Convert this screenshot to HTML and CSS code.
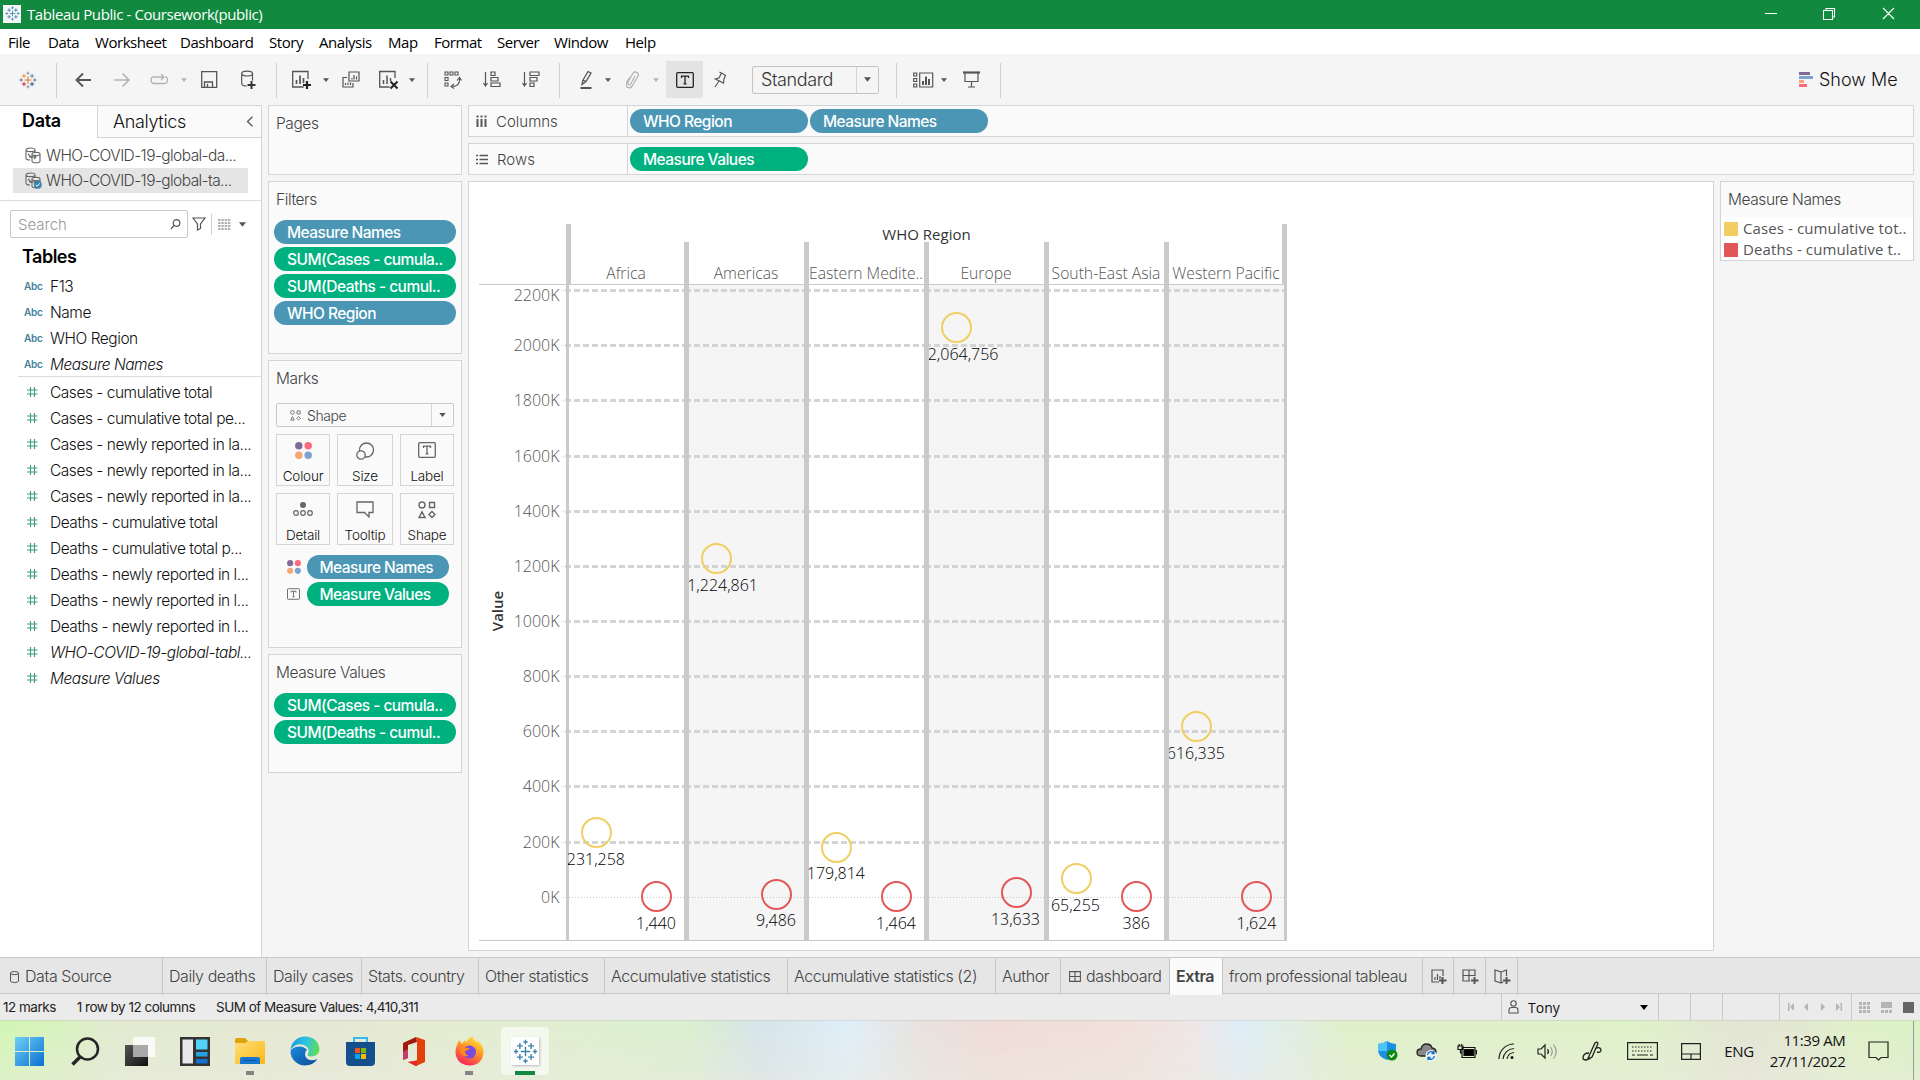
FILE: index.html
```html
<!DOCTYPE html>
<html lang="en">
<head>
<meta charset="utf-8">
<title>Tableau Public - Coursework(public)</title>
<link rel="stylesheet" href="styles.css">
</head>
<body>
<svg width="0" height="0" class="defs">
  <defs>
    <symbol id="hash" viewBox="0 0 12 12"><path d="M4.500 1v10M8.500 1v10M1 4h10.500M1 8h10.500" stroke="#3a9d7c" stroke-width="1.100" fill="none"/></symbol>
    <symbol id="caret" viewBox="0 0 8 5"><path d="M0 0h8L4 5z"/></symbol>
    <symbol id="dots" viewBox="0 0 16 16"><circle cx="3.600" cy="3.600" r="3.500" fill="#826a98"/><circle cx="12.400" cy="3.600" r="3.500" fill="#fb6a7b"/><circle cx="3.600" cy="12.400" r="3.500" fill="#f5a675"/><circle cx="12.400" cy="12.400" r="3.500" fill="#7ea2cf"/></symbol>
    <symbol id="shapes" viewBox="0 0 18 18"><g fill="none" stroke="#666" stroke-width="1.400"><circle cx="4" cy="4" r="3"/><path d="M11.500 1.500h5v5h-5zM4 10.800l3 5.700H1zM14 10.500l3 3-3 3-3-3z"/></g></symbol>
    <symbol id="label" viewBox="0 0 18 16"><g fill="none" stroke="#666" stroke-width="1.300"><rect x=".7" y=".7" width="16.600" height="14.600" rx="1"/><path d="M5.500 6V4.200h7V6M9 4.200v7.600M7.500 11.800h3"/></g></symbol>
    <symbol id="dbs" viewBox="0 0 16 17"><g fill="none" stroke="#666" stroke-width="1.100"><path d="M10 5V3c0-2.600-9-2.600-9 0v8c0 1 1.500 2 4 2M1 3c0 2.200 9 2.200 9 0M3 7l3 3 3-1"/><path fill="#fff" fill-opacity=".6" d="M7 7v7c0 2.400 8 2.400 8 0V7c0-2.200-8-2.200-8 0c0 2 8 2 8 0"/><path d="M4 10h7M9 8l2 2-2 2"/></g></symbol>
    <symbol id="plusmark" viewBox="0 0 29 29"><g fill="none" stroke-width="1.500"><path stroke="#e8762d" d="M14.500 9v11M9 14.500h11" stroke-width="1.800"/><path stroke="#c72035" d="M8 17.500v7M4.500 21h7"/><path stroke="#1f4e79" d="M21 17.500v7M17.500 21h7"/><path stroke="#eb912c" d="M8 4.500v7M4.500 8h7"/><path stroke="#59879b" d="M21 4.500v7M17.500 8h7"/><path stroke="#7199a6" d="M14.500 1v5M12 3.500h5M14.500 23v5M12 25.500h5"/><path stroke="#5b6591" d="M25.500 12v5M23 14.500h5M3.500 12v5M1 14.500h5"/></g></symbol>
    <symbol id="bluemark" viewBox="0 0 29 29"><g fill="none" stroke="#3d82aa" stroke-width="1.600"><path d="M14.500 9v11M9 14.500h11M8 17.500v7M4.500 21h7M21 17.500v7M17.500 21h7M8 4.500v7M4.500 8h7M21 4.500v7M17.500 8h7M14.500 1v5M12 3.500h5M14.500 23v5M12 25.500h5M25.500 12v5M23 14.500h5M3.500 12v5M1 14.500h5"/></g></symbol>
  </defs>
</svg>

<header class="titlebar">
  <span class="app-badge"><svg width="15" height="15"><use href="#bluemark"/></svg></span>
  <span class="app-title">Tableau Public - Coursework(public)</span>
  <svg class="window-buttons" width="130" height="14" fill="none" stroke="#fff" stroke-width="1.100"><path d="M0 6.500h12M58.500 3.500h9v9h-9zM61 3.500V1.500h8.500V10h-2M118 1l11 11M129 1l-11 11"/></svg>
</header>

<nav class="menubar"><span>File</span><span>Data</span><span>Worksheet</span><span>Dashboard</span><span>Story</span><span>Analysis</span><span>Map</span><span>Format</span><span>Server</span><span>Window</span><span>Help</span></nav>

<div class="toolbar">
  <svg width="18" height="18"><use href="#plusmark"/></svg>
  <i class="sep"></i>
  <svg width="18" height="16" fill="none" stroke="#555" stroke-width="1.900"><path d="M16 8H1.500M8 1.500L1.500 8 8 14.500"/></svg>
  <svg width="18" height="16" fill="none" stroke="#b4b4b4" stroke-width="1.600"><path d="M0 8h15M8.500 1.500L15 8l-6.500 6.500"/></svg>
  <svg width="20" height="14" fill="none" stroke="#b4b4b4" stroke-width="1.300"><path d="M13 4H3.500Q1 4 1 7t2.500 3.500h10.500Q17.500 10.500 17.500 7T15 4M11 1l3 3-3 3"/></svg>
  <svg class="caret pale" width="6" height="4"><use href="#caret"/></svg>
  <svg width="18" height="17" fill="none" stroke="#555" stroke-width="1.300"><path d="M.7 .7h15v15.600H.7zM3.500 16v-5h8v5M6.500 13v3"/></svg>
  <svg width="16" height="20" fill="none" stroke="#555" stroke-width="1.200"><path d="M.7 3.500v10c0 1.500 2 2.500 5 2.500M11.500 3.500v7M.7 3.500c0-3.300 10.800-3.300 10.800 0s-10.800 3.300-10.800 0"/><path d="M10.500 11v8M6.500 15h8" stroke="#333" stroke-width="2"/></svg>
  <i class="sep"></i>
  <svg width="20" height="20" fill="none" stroke="#555" stroke-width="1.300"><path d="M16 9V1.500H.7V17h11"/><path d="M4.500 10v4M8 5.500V14M11.500 8v5" stroke-width="1.700"/><path d="M15 11v8M11 15h8" stroke="#222" stroke-width="2.200"/></svg>
  <svg class="caret" width="6" height="4"><use href="#caret"/></svg>
  <svg width="18" height="18" fill="none" stroke="#555" stroke-width="1.200"><path d="M7 1h10v9H7zM10 7v1.500M12 4v4.500M14.500 5.500v3M5 6.500H1V16h10v-4M3.500 12v2M6 11.500V14M8.500 11.500V14"/></svg>
  <svg width="20" height="20" fill="none" stroke="#555" stroke-width="1.300"><path d="M16 8V1.500H.7V17h10"/><path d="M4.500 10v4M8 5.500V14M11.500 8v3" stroke-width="1.500"/><path d="M11.500 11.500l7 7M18.500 11.500l-7 7" stroke="#222" stroke-width="2"/></svg>
  <svg class="caret" width="6" height="4"><use href="#caret"/></svg>
  <i class="sep"></i>
  <svg width="18" height="18" fill="none" stroke="#555" stroke-width="1.100"><path d="M1 1h3v3H1zM6 1h3v3H6zM11 1h3v3h-3zM1 6.500h3v3H1zM1 12h3v3H1zM15.500 7v2q0 6-7 6.500M13 9.500L15.500 6.500 17.500 9.500M10 13L7 15.500l3 2"/></svg>
  <svg width="18" height="17" fill="none" stroke="#555" stroke-width="1.200"><path d="M2.500 1v13M.5 12l2 3 2-3M8 1h4v3.500H8zM8 6.500h7V10H8zM8 12h9v3.500H8z"/></svg>
  <svg width="18" height="17" fill="none" stroke="#555" stroke-width="1.200"><path d="M2.500 1v13M.5 12l2 3 2-3M8 1h9v3.500H8zM8 6.500h7V10H8zM8 12h4v3.500H8z"/></svg>
  <i class="sep"></i>
  <svg width="14" height="20" fill="none" stroke="#555" stroke-width="1.300"><path d="M3 10L8 1.500l3 1.500-5 8.500-4 3zM3 10l3 1.500"/><path d="M.5 18h11" stroke-width="2"/></svg>
  <svg class="caret" width="6" height="4"><use href="#caret"/></svg>
  <svg width="14" height="18" fill="none" stroke="#b0b0b0" stroke-width="1.200"><path d="M9 5L5 12.500q-1 2-2.500 1T2.500 10L6.500 3Q8.500-.5 11 1.500T11.500 6L7.500 13Q5 18 2 16.500T1 11L3.500 6.500"/></svg>
  <svg class="caret pale" width="6" height="4"><use href="#caret"/></svg>
  <span class="tool-active"><svg width="18" height="16" fill="none" stroke="#222" stroke-width="1.300"><rect x=".7" y=".7" width="16.600" height="14.600" rx="1"/><path d="M5.500 6V4.200h7V6M9 4.200v7.600M7.500 11.800h3"/></svg></span>
  <svg width="14" height="17" fill="none" stroke="#555" stroke-width="1.200"><path d="M5.500 1l6.500 3.500M7.500 2L5 7 1.500 8l8 4 .5-4L11.500 4M5 10L1 16"/></svg>
  <div class="fit-select"><span>Standard</span><b><svg class="caret" width="7" height="5"><use href="#caret"/></svg></b></div>
  <i class="sep"></i>
  <svg width="21" height="16" fill="none" stroke="#555" stroke-width="1.200"><path d="M.7 1h3v3h-3zM.7 6.500h3v3h-3zM.7 12h3v3h-3zM6.700 1h13v14h-13z"/><path d="M10 9v4M13 4.500V13M16 7v6" stroke-width="2"/></svg>
  <svg class="caret" width="6" height="4"><use href="#caret"/></svg>
  <svg width="18" height="17" fill="none" stroke="#555" stroke-width="1.200"><path d="M0 1.500h17" stroke-width="2.200"/><path d="M2 2v8.500h13V2M8.500 10.500V16M5 16h7"/></svg>
  <i class="sep"></i>
  <div class="show-me"><svg width="14" height="16"><path fill="#826a98" d="M0 0h11v3H0z"/><path fill="#7ea2cf" d="M0 4h14v3H0z"/><path fill="#f5a675" d="M0 8h5v3H0z"/><path fill="#fb6a7b" d="M0 12h8v3H0z"/></svg><span>Show Me</span></div>
</div>

<main class="workspace">
  <aside class="data-pane">
    <div class="pane-tabs"><span class="pane-tab-on">Data</span><span class="pane-tab">Analytics<svg width="8" height="11" fill="none" stroke="#555" stroke-width="1.300"><path d="M6.500 .8L1.500 5.500l5 4.700"/></svg></span></div>
    <div class="sources">
      <div class="source"><svg width="16" height="17"><use href="#dbs"/></svg><span>WHO-COVID-19-global-da...</span></div>
      <div class="source picked"><svg width="17" height="17"><use href="#dbs" width="16" height="17"/><circle cx="12.800" cy="12.800" r="4" fill="#3b83a8"/><path d="M10.800 12.800l1.500 1.500 2.500-3" stroke="#fff" fill="none"/></svg><span>WHO-COVID-19-global-ta...</span></div>
    </div>
    <div class="search-row">
      <div class="search"><span>Search</span><svg width="11" height="11" fill="none" stroke="#555" stroke-width="1.200"><circle cx="6.500" cy="4" r="3.300"/><path d="M4 6.500L.8 10"/></svg></div>
      <svg width="14" height="14" fill="none" stroke="#555" stroke-width="1.200"><path d="M1 1h12L8.500 7v4.500L5.500 13V7z"/></svg>
      <i class="sep"></i>
      <svg width="13" height="11" stroke="#666" stroke-width="1.200"><path d="M0 1h13M0 4h13M0 7h13M0 10h13" stroke-dasharray="2.500 .8"/></svg>
      <svg class="caret" width="7" height="5"><use href="#caret"/></svg>
    </div>
    <h2 class="tables">Tables</h2>
    <ul class="fields dims">
      <li><b>Abc</b>F13</li>
      <li><b>Abc</b>Name</li>
      <li><b>Abc</b>WHO Region</li>
      <li><b>Abc</b><em>Measure Names</em></li>
    </ul>
    <ul class="fields">
      <li><svg width="12" height="12"><use href="#hash"/></svg>Cases - cumulative total</li>
      <li><svg width="12" height="12"><use href="#hash"/></svg>Cases - cumulative total pe...</li>
      <li><svg width="12" height="12"><use href="#hash"/></svg>Cases - newly reported in la...</li>
      <li><svg width="12" height="12"><use href="#hash"/></svg>Cases - newly reported in la...</li>
      <li><svg width="12" height="12"><use href="#hash"/></svg>Cases - newly reported in la...</li>
      <li><svg width="12" height="12"><use href="#hash"/></svg>Deaths - cumulative total</li>
      <li><svg width="12" height="12"><use href="#hash"/></svg>Deaths - cumulative total p...</li>
      <li><svg width="12" height="12"><use href="#hash"/></svg>Deaths - newly reported in l...</li>
      <li><svg width="12" height="12"><use href="#hash"/></svg>Deaths - newly reported in l...</li>
      <li><svg width="12" height="12"><use href="#hash"/></svg>Deaths - newly reported in l...</li>
      <li><svg width="12" height="12"><use href="#hash"/></svg><em>WHO-COVID-19-global-tabl...</em></li>
      <li><svg width="12" height="12"><use href="#hash"/></svg><em>Measure Values</em></li>
    </ul>
  </aside>

  <section class="cards">
    <div class="card pages"><h3>Pages</h3></div>
    <div class="card filters"><h3>Filters</h3>
      <span class="pill blue">Measure Names</span><span class="pill green">SUM(Cases - cumula..</span><span class="pill green">SUM(Deaths - cumul..</span><span class="pill blue">WHO Region</span>
    </div>
    <div class="card marks"><h3>Marks</h3>
      <div class="mark-type"><svg width="11" height="11"><use href="#shapes"/></svg><span>Shape</span><b><svg class="caret" width="7" height="4"><use href="#caret"/></svg></b></div>
      <div class="mark-buttons">
        <div><svg width="17" height="17"><use href="#dots"/></svg><span>Colour</span></div>
        <div><svg width="18" height="18" fill="none" stroke="#666" stroke-width="1.300"><circle cx="10.500" cy="8" r="7"/><circle cx="5" cy="13" r="4.200" fill="#fafafa"/></svg><span>Size</span></div>
        <div><svg width="18" height="16"><use href="#label"/></svg><span>Label</span></div>
        <div><svg width="20" height="16" fill="none" stroke="#666" stroke-width="1.200"><circle cx="10" cy="4" r="3" fill="#666" stroke="none"/><circle cx="3" cy="12" r="2.300"/><circle cx="10" cy="12" r="2.300"/><circle cx="17" cy="12" r="2.300"/></svg><span>Detail</span></div>
        <div><svg width="18" height="17" fill="none" stroke="#666" stroke-width="1.300"><path d="M1 1h16v10.500h-4V16l-4.500-4.500H1z"/></svg><span>Tooltip</span></div>
        <div><svg width="18" height="18"><use href="#shapes"/></svg><span>Shape</span></div>
      </div>
      <div class="mark-pill"><svg width="14" height="14"><use href="#dots"/></svg><span class="pill blue">Measure Names</span></div>
      <div class="mark-pill"><svg width="13" height="12"><use href="#label"/></svg><span class="pill green">Measure Values</span></div>
    </div>
    <div class="card values"><h3>Measure Values</h3>
      <span class="pill green">SUM(Cases - cumula..</span><span class="pill green">SUM(Deaths - cumul..</span>
    </div>
  </section>

  <section class="sheet">
    <div class="shelf"><div class="shelf-name"><svg width="11" height="13" stroke="#555" stroke-width="2"><path d="M1.500 4v8M5.500 4v8M9.500 4v8M1.500 .5v2M5.500 .5v2M9.500 .5v2"/></svg><span>Columns</span></div><span class="pill blue">WHO Region</span><span class="pill blue">Measure Names</span></div>
    <div class="shelf"><div class="shelf-name"><svg width="12" height="11" stroke="#555" stroke-width="1.700"><path d="M3.500 1.500h8.500M3.500 5.500h8.500M3.500 9.500h8.500M0 1.500h2M0 5.500h2M0 9.500h2"/></svg><span>Rows</span></div><span class="pill green">Measure Values</span></div>
    <div class="canvas-row">
      <div class="view">
        <svg class="chart" width="1243" height="767" viewBox="469 182 1243 767">
          <defs>
            <path id="grid" d="M565 0h120M685 0h120M805 0h120M925 0h120M1045 0h120M1165 0h120"/>
            <clipPath id="plot"><path d="M568 285h117v655H568zM689 285h116v655H689zM808.500 285h117v655h-117zM929 285h116v655H929zM1049 285h116v655h-116zM1169 285h116v655h-116z"/></clipPath>
          </defs>
          <path class="band" d="M687 285h120v655H687zM927 285h120v655H927zM1167 285h118v655h-118z"/>
          <g class="gridlines">
            <use href="#grid" y="290.500"/><use href="#grid" y="345.500"/><use href="#grid" y="400.500"/><use href="#grid" y="456.500"/><use href="#grid" y="511.500"/><use href="#grid" y="566.500"/><use href="#grid" y="621.500"/><use href="#grid" y="676.500"/><use href="#grid" y="731.500"/><use href="#grid" y="786.500"/><use href="#grid" y="842.500"/>
          </g>
          <path class="zero" d="M569 897.500h716"/>
          <path class="ticks" d="M561 290.500h5M561 345.500h5M561 400.500h5M561 456.500h5M561 511.500h5M561 566.500h5M561 621.500h5M561 676.500h5M561 731.500h5M561 786.500h5M561 842.500h5M561 897.500h5"/>
          <path class="frame" d="M479 284h808v1H479zM479 940h808v1H479zM566 224h5v61h-5zM566 285h3v655h-3zM684 242h5v698h-5zM804 242h5v698h-5zM924 242h5v698h-5zM1044 242h5v698h-5zM1164 242h5v698h-5zM1282 224h5v61h-5zM1284 285h3v655h-3z"/>
          <g class="mark cases"><circle cx="596.500" cy="832.500" r="14.500"/><circle cx="716.500" cy="558.500" r="14.500"/><circle cx="836.500" cy="847.500" r="14.500"/><circle cx="956.500" cy="327.500" r="14.500"/><circle cx="1076.500" cy="878.500" r="14.500"/><circle cx="1196.500" cy="726.500" r="14.500"/></g>
          <g class="mark deaths"><circle cx="656.500" cy="896.500" r="14.500"/><circle cx="776.500" cy="894.500" r="14.500"/><circle cx="896.500" cy="896.500" r="14.500"/><circle cx="1016.500" cy="892.500" r="14.500"/><circle cx="1136.500" cy="896.500" r="14.500"/><circle cx="1256.500" cy="896.500" r="14.500"/></g>
          <g class="values" clip-path="url(#plot)">
            <text x="625" y="865">231,258</text><text x="676" y="929">1,440</text>
            <text x="758" y="591">1,224,861</text><text x="796" y="926">9,486</text>
            <text x="865" y="879">179,814</text><text x="916" y="929">1,464</text>
            <text x="998.500" y="360">2,064,756</text><text x="1040" y="925">13,633</text>
            <text x="1100" y="911">65,255</text><text x="1150" y="929">386</text>
            <text x="1225" y="759">616,335</text><text x="1276.500" y="929">1,624</text>
          </g>
          <g class="ylabels">
            <text x="559.500" y="301">2200K</text><text x="559.500" y="351">2000K</text><text x="559.500" y="406">1800K</text><text x="559.500" y="462">1600K</text><text x="559.500" y="517">1400K</text><text x="559.500" y="572">1200K</text><text x="559.500" y="627">1000K</text><text x="559.500" y="682">800K</text><text x="559.500" y="737">600K</text><text x="559.500" y="792">400K</text><text x="559.500" y="848">200K</text><text x="559.500" y="903">0K</text>
          </g>
          <g class="headers">
            <text x="626" y="279">Africa</text><text x="746" y="279">Americas</text><text x="866" y="279">Eastern Medite..</text><text x="986" y="279">Europe</text><text x="1106" y="279">South-East Asia</text><text x="1226" y="279">Western Pacific</text>
          </g>
          <text class="axis-title" x="926.500" y="240">WHO Region</text>
          <text class="axis-title strong" transform="translate(502.500 611) rotate(-90)">Value</text>
        </svg>
      </div>
      <div class="legend"><h3>Measure Names</h3>
        <div class="legend-items">
          <p><i class="cases-key"></i><span>Cases - cumulative tot..</span></p>
          <p><i class="deaths-key"></i><span>Deaths - cumulative t..</span></p>
        </div>
      </div>
    </div>
  </section>
</main>

<div class="sheet-tabs">
  <span><svg width="9" height="12" fill="none" stroke="#555"><path d="M.5 2v8q0 1.500 4 1.500T8.500 10V2Q8.500 .5 4.500 .5T.5 2q0 1.700 4 1.700T8.500 2"/></svg>Data Source</span><span>Daily deaths</span><span>Daily cases</span><span>Stats. country</span><span>Other statistics</span><span>Accumulative statistics</span><span>Accumulative statistics (2)</span><span>Author</span><span class="dash-tab"><svg width="12" height="11" fill="none" stroke="#555" stroke-width="1.100"><path d="M.6 .6h10.800v9.800H.6zM6 .6v9.800M.6 5.500h10.800"/></svg>dashboard</span><span class="current">Extra</span><span>from professional tableau</span>
  <span class="new"><svg width="17" height="16" fill="none" stroke="#555" stroke-width="1.200"><path d="M12 7V1H1v12h7M4 8v3M6.500 5v6M9 7v3"/><path d="M11.500 8v7M8 11.500h7.500" stroke-width="2"/></svg></span>
  <span class="new"><svg width="17" height="16" fill="none" stroke="#555" stroke-width="1.200"><path d="M13 7V1H1v11h7M7 1v11M1 6.500h12"/><path d="M12.500 8v7M9 11.500h7.500" stroke-width="2"/></svg></span>
  <span class="new"><svg width="17" height="16" fill="none" stroke="#555" stroke-width="1.200"><path d="M7 3v11L1 12V1zM7 3l5.500-2V7M7 14l2-1"/><path d="M12.500 8v7M9 11.500h7.500" stroke-width="2"/></svg></span>
  <span class="rest"></span>
</div>

<div class="status">
  <span>12 marks</span><span>1 row by 12 columns</span><span>SUM of Measure Values: 4,410,311</span>
  <span class="user"><svg width="11" height="14" fill="none" stroke="#555" stroke-width="1.100"><circle cx="5.500" cy="3.500" r="2.700"/><path d="M1 13V10q0-2.500 2.500-2.500h4Q10 7.500 10 10v3z"/></svg>Tony<svg class="caret dark" width="8" height="5"><use href="#caret"/></svg></span>
  <span class="cell"></span><span class="cell"></span><span class="cell"></span>
  <span class="cell"><svg width="56" height="10" fill="#b4b4b4"><path d="M1 1h1.500v8H1zM7 1v8L3 5zM21 1v8l-4-4zM34 1v8l4-4zM49 1v8l4-4zM53.500 1H55v8h-1.500z"/></svg></span>
  <span class="cell"><svg width="56" height="11" fill="#b4b4b4"><path d="M0 0h3v3H0zM4 0h3v3H4zM8 0h3v3H8zM0 4h3v3H0zM4 4h3v3H4zM8 4h3v3H8zM0 8h3v3H0zM4 8h3v3H4zM8 8h3v3H8zM22 0h11v6H22zM22 8h3v3h-3zM26 8h3v3h-3zM30 8h3v3h-3z"/><path fill="#666" d="M44 0h11v11H44z"/></svg></span>
</div>

<footer class="taskbar">
  <svg width="29" height="29"><defs><linearGradient id="win" x2="1" y2="1"><stop stop-color="#6fd0f8"/><stop offset="1" stop-color="#0a6fd0"/></linearGradient></defs><path fill="url(#win)" d="M0 0h14v14H0zM15 0h14v14H15zM0 15h14v14H0zM15 15h14v14H15z"/></svg>
  <svg width="29" height="29" fill="none" stroke="#262626" stroke-width="2.500"><circle cx="16.500" cy="12" r="10.500"/><path d="M9 20l-7.500 7.500" stroke-width="3.500"/></svg>
  <svg width="30" height="29"><defs><linearGradient id="tv" x2="1" y2="1"><stop stop-color="#555"/><stop offset="1" stop-color="#111"/></linearGradient></defs><path fill="url(#tv)" d="M0 8h23v21H0z"/><path fill="#fff" opacity=".8" d="M8 0h22v20H8z"/><path fill="#999" opacity=".75" d="M8 8h15v12H8z"/></svg>
  <svg width="30" height="29"><path fill="#333" d="M0 0h30v29H0z"/><path fill="#e6e8eb" d="M2.500 2.500H13v24H2.500z"/><path fill="#4fd3fb" d="M16 2.500h11.500v10H16z"/><path fill="#2aa0e0" d="M16 15h11.500v4.500H16z"/><path fill="#1473d2" d="M16 22h11.500v4.500H16z"/></svg>
  <span class="running"><svg width="30" height="29"><defs><linearGradient id="fo" x2="1" y2="1"><stop stop-color="#ffdf7a"/><stop offset="1" stop-color="#fcb714"/></linearGradient></defs><path fill="#e0a008" d="M0 3q0-2 2-2h8l3 3v6H0z"/><path fill="url(#fo)" d="M0 6h10l3-2h17v23H0z"/><path fill="#1677d0" d="M5 27v-5q0-2 2-2h16q2 0 2 2v5z"/><path stroke="#0a4f9c" d="M9 23.500h12"/></svg></span>
  <svg width="30" height="30" viewBox="0 0 30 30"><defs><linearGradient id="ed" x1="0" y1=".4" x2="1" y2=".6"><stop stop-color="#1f9de4"/><stop offset=".5" stop-color="#2fc4e0"/><stop offset="1" stop-color="#62df4d"/></linearGradient><linearGradient id="eb" x2="1" y2="1"><stop stop-color="#1b8be0"/><stop offset="1" stop-color="#0d4a94"/></linearGradient></defs><path fill="url(#eb)" d="M.500 15A14.500 14.500 0 0 0 15 29.500q8 0 12.500-6.500-9 3.500-12-2.500-1.500-4 1.500-6.500-3-4-8-3.500Q2 11 .5 15z"/><path fill="url(#ed)" d="M.5 14.500A14.500 14.500 0 0 1 15 .5Q28 1 29.500 13q0 7-8 7.500-5 0-3.500-3 2-3.500-1.500-7Q10 6 3.500 10.500.8 12.500.5 14.500z"/></svg>
  <svg width="29" height="29"><path fill="none" stroke="#35b8ee" stroke-width="2" d="M8 6V1h13v5"/><path fill="#15508e" d="M0 5h29v20q0 4-4 4H4q-4 0-4-4z"/><path fill="#f25022" d="M9 11h5v5H9z"/><path fill="#7fba00" d="M15 11h5v5h-5z"/><path fill="#00a4ef" d="M9 17h5v5H9z"/><path fill="#ffb900" d="M15 17h5v5h-5z"/></svg>
  <svg width="22" height="29"><path fill="#e2410b" d="M13 0l9 3v22l-9 4-8-4 9-1.500V5z"/><path fill="#9e1b0e" d="M13 0L0 6v17l5-2V8l9-3z"/><path fill="#c23b6c" d="M0 15l5-3v9l-5 2z"/><path fill="#e02a2a" d="M5 25l9-1.500V29l-1 .0z"/></svg>
  <span class="running"><svg width="29" height="30"><defs><linearGradient id="ff" x1=".8" y1="0" x2=".3" y2="1"><stop stop-color="#fff045"/><stop offset=".45" stop-color="#ff9a24"/><stop offset="1" stop-color="#f5205d"/></linearGradient></defs><path fill="url(#ff)" d="M2 9l2-5 3 4 3-4 1 3Q13 2 18 0q-1 3 4 6l1-1q6 5 5.500 12Q27 29 15 29.500 2 29 .5 17 .5 12 2 9z"/><circle cx="14.500" cy="16" r="6.500" fill="#7a4be0"/><path fill="#ff8a1f" d="M6 11q5 1 9 1-2 3-5 3 0 4 4 5-7 1-9-4z"/></svg></span>
  <span class="running active"><span class="tab-tile"><svg width="25" height="25"><use href="#bluemark"/></svg></span></span>
  <i></i>
  <svg width="20" height="20"><path fill="#1e90e4" d="M9 0q4 3 9 3v6q0 7-9 10Q0 16 0 9V3q5 0 9-3z"/><path fill="#4cc6f6" d="M9 0v10H0V3q5 0 9-3z"/><circle cx="14" cy="14" r="5.500" fill="#0d8a16"/><path d="M11.500 14l2 2 3-3.500" stroke="#fff" stroke-width="1.300" fill="none"/></svg>
  <svg width="21" height="19"><path fill="#888" stroke="#222" stroke-width="1.300" d="M5 14Q1 14 1 10.500T5 7Q6 2 10.500 2T16 6q4 .5 4 4t-4 4z"/><circle cx="15" cy="13.500" r="5.500" fill="#eef4fa"/><path fill="none" stroke="#0b6bc4" stroke-width="1.300" d="M11.500 13a3.700 3.700 0 0 1 6.500-2M18 9v2.500h-2.500M18.500 14a3.700 3.700 0 0 1-6.500 2M12 18v-2.500h2.500"/></svg>
  <svg width="20" height="15" fill="none" stroke="#111" stroke-width="1.200"><path d="M5 3.500h13v10H5zM18.500 6.500h1v4M1 2h5v3.500H1zM2.200 2V0M4.700 2V0M3.500 5.500V9H5"/><path fill="#000" d="M7 5.500h9.500v6H7z"/></svg>
  <svg width="17" height="17" fill="none" stroke="#222" stroke-width="1.200"><path d="M1 16A15 15 0 0 1 16 1M5 16A11.500 11.500 0 0 1 16 5.500M9 16a8 8 0 0 1 7-6.500"/><circle cx="14" cy="14.500" r="1.500" fill="#111" stroke="none"/></svg>
  <svg width="21" height="17" fill="none" stroke="#222" stroke-width="1.200"><path d="M1 6h3l4-4v13l-4-4H1zM10.500 6q2 2.500 0 5"/><path stroke="#999" d="M13.500 4q3.500 4.500 0 9M16.500 1.500q5.500 7 0 14"/></svg>
  <svg width="20" height="20" fill="none" stroke="#222" stroke-width="1.300"><path d="M7 15L13 2q2-2 3 .5L10 16l-3 2zM7 12Q1 12 1 17q0 2 3 2 2 0 3-4M13 8q5-3 6 1 0 3-4 2"/></svg>
  <svg width="31" height="18" fill="none" stroke="#222" stroke-width="1.200"><path d="M.6 .6h29.800v16.800H.6z"/><path stroke-dasharray="1.500 1.500" d="M5 5h21M5 9h21"/><path d="M5 13h3M10 13h11M23 13h3"/></svg>
  <svg width="20" height="17" fill="none" stroke="#222" stroke-width="1.200"><path d="M.6 .6h18.800v15.800H.6zM.6 11h18.800M10 11v5"/></svg>
  <span class="lang">ENG</span>
  <span class="clock">11:39 AM<br>27/11/2022</span>
  <svg width="21" height="21" fill="none" stroke="#222" stroke-width="1.200"><path d="M1 1h19v15.500h-7L10.500 19 8 16.500H1z"/></svg>
  <i class="peek"></i>
</footer>
</body>
</html>
```
FILE: styles.css
```css
* { box-sizing: border-box; margin: 0; padding: 0; }
body { width: 1920px; height: 1080px; overflow: hidden; background: #f5f5f5; font-family: "Inter", "Liberation Sans", sans-serif; font-size: 15px; color: #222; white-space: nowrap; }
.defs { position: absolute; }
svg { display: block; flex: none; }
ul { list-style: none; }
.sep { width: 1px; background: #cfcfcf; }
.caret { fill: #555; }
.caret.pale { fill: #b4b4b4; }
.caret.dark { fill: #000; }

.titlebar { height: 29px; background: #11893e; display: flex; align-items: center; padding: 0 25px 1px 3px; color: #fff; font: 15px "Open Sans", sans-serif; letter-spacing: -.4px; }
.app-badge { width: 18px; height: 18px; background: #f4f7f8; display: grid; place-items: center; margin: 0 6px 1px 0; }
.app-title { flex: 1; }

.menubar { height: 25px; background: #fff; display: grid; grid-template-columns: 40px 47px 85px 89px 50px 69px 46px 63px 57px 71px 60px; padding-left: 8px; align-items: center; color: #000; font: 15px/27px "Open Sans", sans-serif; letter-spacing: -.45px; }

.toolbar { height: 51px; display: flex; align-items: center; }
.toolbar > .sep { height: 35px; margin-top: 2px; }
.toolbar > :nth-child(1) { margin-left: 19px; }
.toolbar > :nth-child(2) { margin-left: 19px; }
.toolbar > :nth-child(3) { margin-left: 18px; }
.toolbar > :nth-child(4) { margin-left: 21px; }
.toolbar > :nth-child(5) { margin-left: 18px; }
.toolbar > :nth-child(6) { margin-left: 11px; }
.toolbar > :nth-child(7) { margin-left: 14px; }
.toolbar > :nth-child(8) { margin-left: 22px; }
.toolbar > :nth-child(9) { margin-left: 19px; }
.toolbar > :nth-child(10) { margin-left: 15px; }
.toolbar > :nth-child(11) { margin-left: 11px; }
.toolbar > :nth-child(12) { margin-left: 13px; }
.toolbar > :nth-child(13) { margin-left: 19px; }
.toolbar > :nth-child(14) { margin-left: 10px; }
.toolbar > :nth-child(15) { margin-left: 12px; }
.toolbar > :nth-child(16) { margin-left: 16px; }
.toolbar > :nth-child(17) { margin-left: 21px; }
.toolbar > :nth-child(18) { margin-left: 21px; }
.toolbar > :nth-child(19) { margin-left: 19px; }
.toolbar > :nth-child(20) { margin-left: 20px; }
.toolbar > :nth-child(21) { margin-left: 11px; }
.toolbar > :nth-child(22) { margin-left: 15px; }
.toolbar > :nth-child(23) { margin-left: 13px; }
.toolbar > :nth-child(24) { margin-left: 7px; }
.toolbar > :nth-child(25) { margin-left: 11px; }
.toolbar > :nth-child(26) { margin-left: 24px; }
.toolbar > :nth-child(27) { margin-left: 17px; }
.toolbar > :nth-child(28) { margin-left: 16px; }
.toolbar > :nth-child(29) { margin-left: 7px; }
.toolbar > :nth-child(30) { margin-left: 16px; }
.toolbar > :nth-child(31) { margin-left: 19px; }
.tool-active { width: 37px; height: 37px; background: #e3e3e3; display: grid; place-items: center; }
.fit-select { width: 127px; height: 28px; border: 1px solid #c4c4c4; border-radius: 2px; display: flex; align-items: center; font-size: 18px; font-weight: 300; letter-spacing: -.4px; color: #333; padding-left: 8px; }
.fit-select span { flex: 1; }
.fit-select b { width: 22px; height: 26px; border-left: 1px solid #d4d4d4; display: grid; place-items: center; }
.toolbar .show-me { margin-left: auto; width: 121px; display: flex; gap: 6px; align-items: center; font-size: 18px; font-weight: 300; color: #111; }

.workspace { height: 852px; display: flex; }
.data-pane { width: 262px; background: #fff; border: solid #d4d4d4; border-width: 1px 1px 0 0; color: #111; }
.pane-tabs { height: 32px; display: flex; font-size: 18px; line-height: 32px; letter-spacing: -.35px; color: #111; }
.pane-tab-on { width: 97px; padding-left: 22px; font-weight: 600; line-height: 30px; color: #000; }
.pane-tab { flex: 1; display: flex; justify-content: space-between; align-items: center; font-weight: 300; background: #fafafa; border: solid #d4d4d4; border-width: 0 0 1px 1px; padding: 0 7px 0 15px; }
.sources { height: 63px; border-bottom: 1px solid #dcdcdc; padding: 5px 13px 0; color: #444; font-weight: 300; font-size: 15.5px; letter-spacing: -.58px; }
.source { height: 25px; display: flex; align-items: center; gap: 5px; padding-left: 12px; }
.source.picked { background: #e5e5e5; gap: 4px; }
.search-row { height: 46px; padding: 9px 0 9px 10px; display: flex; align-items: center; }
.search { width: 178px; height: 28px; border: 1px solid #c8c8c8; border-radius: 2px; display: flex; align-items: center; justify-content: space-between; padding: 0 6px 0 7px; color: #999; font-weight: 300; }
.search-row > svg { margin-left: 4px; }
.search-row .sep { height: 21px; margin: 0 2px 0 5px; }
.search-row .caret { margin-left: 8px; }
.tables { font-size: 18px; font-weight: 600; line-height: 20px; letter-spacing: -.5px; padding-left: 22px; height: 20px; color: #000; }
.fields { margin-left: 18px; font-weight: 300; font-size: 15.5px; letter-spacing: -.47px; }
.fields li { height: 26px; display: flex; align-items: center; }
.fields b { width: 26px; margin-left: 6px; font-size: 10px; font-weight: 600; letter-spacing: -.3px; color: #3f7f99; }
.fields svg { margin: 0 12px 0 8px; }
.fields.dims { height: 104px; border-bottom: 1px solid #dcdcdc; margin: 6px 0 2px 18px; }

.cards { width: 206px; padding: 0 6px; display: flex; flex-direction: column; gap: 6px; }
.card { background: #fafafa; border: 1px solid #d4d4d4; display: flex; flex-direction: column; align-items: center; gap: 3px; }
h3 { align-self: stretch; font-size: 15.5px; font-weight: 300; letter-spacing: -.42px; color: #444; line-height: 36px; height: 35px; padding-left: 7px; }
.pages { height: 70px; }
.filters { height: 173px; }
.marks { height: 288px; }
.values { height: 119px; }
.pill { width: 182px; height: 24px; border-radius: 12px; padding-left: 13px; color: #fff; font-weight: 500; line-height: 26px; font-size: 15.5px; letter-spacing: -.53px; flex: none; }
.blue { background: #4a96b4; }
.green { background: #00b180; }
.mark-type { margin-top: 4px; width: 178px; height: 24px; border: 1px solid #c8c8c8; border-radius: 2px; display: flex; align-items: center; padding-left: 13px; font-size: 14px; font-weight: 300; letter-spacing: -.4px; color: #444; }
.mark-type span { flex: 1; padding-left: 6px; }
.mark-type b { width: 22px; height: 22px; border-left: 1px solid #d4d4d4; display: grid; place-items: center; }
.mark-buttons { margin: 4px 0 7px; width: 178px; display: grid; grid-template: 52px 52px / 54px 56px 54px; gap: 7px; font-size: 13.5px; font-weight: 300; letter-spacing: -.2px; color: #111; }
.mark-buttons div { border: 1px solid #d4d4d4; display: flex; flex-direction: column; align-items: center; justify-content: space-between; padding: 7px 0 0; }
.mark-buttons span { line-height: 18px; }
.mark-pill { width: 162px; margin-left: 5px; display: flex; align-items: center; justify-content: space-between; }
.mark-pill .pill { width: 142px; }

.sheet { width: 1446px; display: flex; flex-direction: column; gap: 6px; }
.shelf { height: 32px; border: 1px solid #d4d4d4; background: #fafafa; display: flex; align-items: center; gap: 2px; font-weight: 300; font-size: 15px; color: #444; }
.shelf-name { width: 159px; height: 30px; border-right: 1px solid #d4d4d4; display: flex; align-items: center; padding-left: 7px; gap: 9px; }
.shelf-name span { line-height: 30px; padding-top: 1px; }
.shelf .pill { width: 178px; padding-left: 13px; }
.canvas-row { display: flex; gap: 6px; align-items: flex-start; }
.view { width: 1246px; height: 770px; background: #fff; border: 1px solid #d4d4d4; }
.legend { width: 194px; height: 80px; border: 1px solid #d4d4d4; background: #fff; }
.legend h3 { background: #fafafa; }
.legend-items { padding-top: 1px; }
.legend p { display: flex; align-items: center; height: 21px; gap: 5px; padding-left: 3px; font: 15px/18px "Open Sans", sans-serif; color: #555; letter-spacing: .1px; }
.legend span { margin-top: -2px; }
.legend i { width: 14px; height: 14px; }
.cases-key { background: #f1ce63; }
.deaths-key { background: #e15759; }

.chart { font: 15px "Open Sans", sans-serif; }
.band { fill: #f5f5f5; }
.gridlines { stroke: #d4d4d4; stroke-width: 3; stroke-dasharray: 6 3; fill: none; }
.zero { stroke: #c8c8c8; stroke-dasharray: 1 2; fill: none; }
.ticks { stroke: #ececec; fill: none; }
.frame { fill: #cacaca; }
.mark { fill: none; stroke-width: 2; }
.cases { stroke: #f1ce63; }
.deaths { stroke: #e15759; }
.chart .values { font-size: 16px; font-weight: 300; text-anchor: end; fill: #000; }
.ylabels { font-size: 16px; font-weight: 300; text-anchor: end; fill: #555; }
.headers { font-size: 15.7px; font-weight: 300; text-anchor: middle; fill: #555; }
.axis-title { text-anchor: middle; fill: #333; font-weight: 500; }
.strong { font-weight: 600; font-size: 15px; }

.sheet-tabs { height: 37px; background: #e6e6e6; border: solid #c8c8c8; border-width: 1px 0; display: grid; grid-template-columns: 163px 104px 95px 117px 126px 183px 208px 65px 109px 53px 200px 31px 32px 32px 1fr; font-weight: 300; font-size: 16px; line-height: 37px; letter-spacing: -.43px; color: #444; }
.sheet-tabs span { border-right: 1px solid #c8c8c8; padding-left: 6px; display: flex; align-items: center; gap: 6px; }
.sheet-tabs span:first-child { padding-left: 10px; }
.sheet-tabs .dash-tab { padding-left: 8px; gap: 5px; }
.sheet-tabs .current { background: #fafafa; font-weight: 600; color: #444; }
.sheet-tabs .new { padding-left: 8px; }
.sheet-tabs .rest { border: 0; }
.status { height: 26px; background: #ebebeb; display: flex; align-items: center; padding-left: 3px; gap: 21px; font-size: 13.5px; letter-spacing: -.5px; color: #222; }
.user { margin-left: auto; width: 157px; height: 26px; border-left: 1px solid #cacaca; display: flex; align-items: center; padding: 0 10px 0 6px; gap: 9px; font: 14px "Open Sans", sans-serif; letter-spacing: 0; color: #111; }
.user .caret { margin-left: auto; }
.cell { height: 26px; border-left: 1px solid #cacaca; margin-left: -21px; display: flex; align-items: center; width: 32px; }
.cell:nth-of-type(7) { width: 57px; }
.cell:nth-of-type(8) { width: 72px; padding-left: 7px; }
.cell:nth-of-type(9) { width: 69px; padding-left: 7px; }

.taskbar { height: 60px; display: grid; align-items: center; justify-items: center; border-top: 1px solid rgba(0,0,0,.08); padding-bottom: 2px;
  grid-template-columns: 59px 52px 58px 52px 58px 52px 58px 50px 60px 52px 819px 35px 43px 37px 42px 40px 49px 52px 45px 52px 85px 56px 14px;
  background: linear-gradient(rgba(235,235,235,0), rgba(235,235,225,.45)), linear-gradient(90deg, #d2f6b4 0, #d8f2be 60px, #e2ebd0 110px, #e6e8d4 330px, #e4ecd0 450px, #ddf0cf 620px, #dbefd0 690px, #d6e4ea 760px, #e0eff9 850px, #e8e2df 920px, #f0dcd8 990px, #f2e0da 1120px, #efe6e6 1190px, #dfeef8 1240px, #e0eee4 1290px, #dff1c8 1350px, #def2c8 1640px, #e4e4d4 1740px, #e2e8d0 1800px, #dff2c6 1860px, #d9f2c4 1920px); }
.running { width: 48px; height: 48px; display: grid; place-items: center; background: no-repeat 50% 100% / 8px 4px linear-gradient(#858585, #858585); }
.running.active { background: no-repeat 50% 100% / 20px 4px linear-gradient(#118a3f, #118a3f), rgba(255,255,255,.6); border-radius: 4px; }
.tab-tile { width: 28px; height: 28px; background: #fff; display: grid; place-items: center; box-shadow: 1px 1px 2px #bbb; }
.lang, .clock { font: 15px/21px "Open Sans", sans-serif; color: #111; letter-spacing: -.4px; text-align: right; }
.peek { width: 1px; height: 60px; background: #9a9a9a; }
```
